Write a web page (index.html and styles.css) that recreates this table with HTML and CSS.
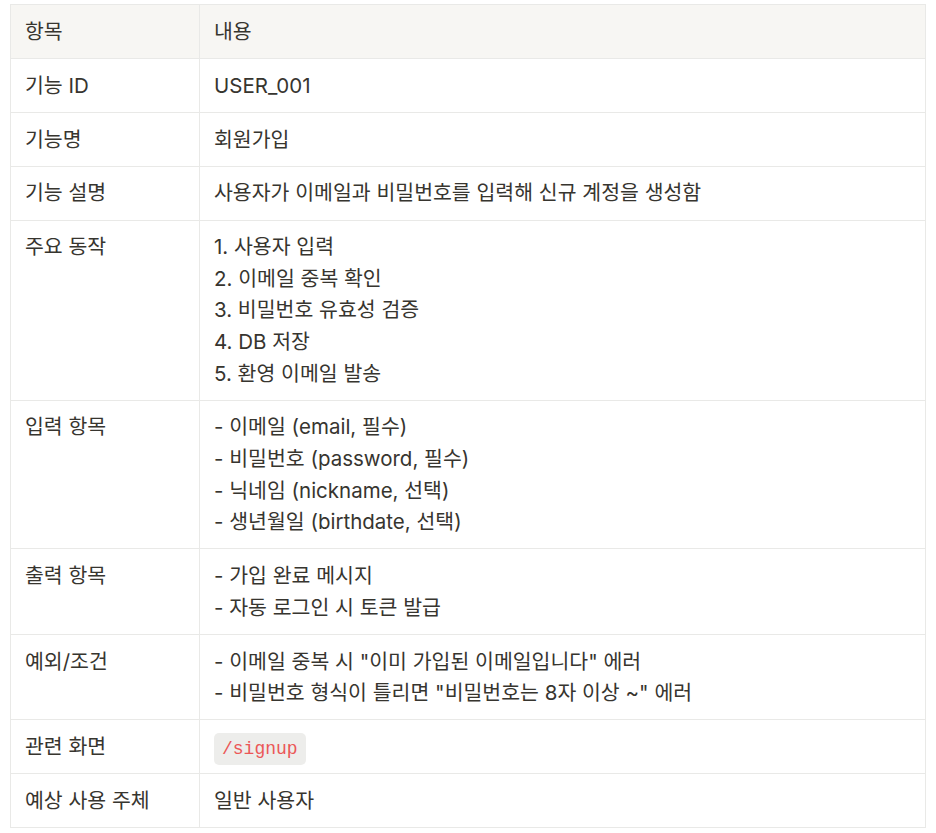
FILE: index.html
```html
<!DOCTYPE html>
<html lang="ko">
<head>
<meta charset="utf-8">
<title>기능 명세</title>
<link rel="stylesheet" href="styles.css">
</head>
<body>
<table class="spec">
  <colgroup><col class="c1"><col class="c2"></colgroup>
  <thead>
    <tr><th>항목</th><th>내용</th></tr>
  </thead>
  <tbody>
    <tr><td>기능 ID</td><td>USER_001</td></tr>
    <tr><td>기능명</td><td>회원가입</td></tr>
    <tr><td>기능 설명</td><td>사용자가 이메일과 비밀번호를 입력해 신규 계정을 생성함</td></tr>
    <tr><td>주요 동작</td><td>1. 사용자 입력<br>2. 이메일 중복 확인<br>3. 비밀번호 유효성 검증<br>4. DB 저장<br>5. 환영 이메일 발송</td></tr>
    <tr><td>입력 항목</td><td>- 이메일 (email, 필수)<br>- 비밀번호 (password, 필수)<br>- 닉네임 (nickname, 선택)<br>- 생년월일 (birthdate, 선택)</td></tr>
    <tr><td>출력 항목</td><td>- 가입 완료 메시지<br>- 자동 로그인 시 토큰 발급</td></tr>
    <tr><td>예외/조건</td><td>- 이메일 중복 시 "이미 가입된 이메일입니다" 에러<br>- 비밀번호 형식이 틀리면 "비밀번호는 8자 이상 ~" 에러</td></tr>
    <tr><td>관련 화면</td><td><code class="code">/signup</code></td></tr>
    <tr><td>예상 사용 주체</td><td>일반 사용자</td></tr>
  </tbody>
</table>
</body>
</html>
```
FILE: styles.css
```css
html, body {
  margin: 0;
  background: #ffffff;
}
body {
  padding: 4px 10px 0 10px;
  font-family: Inter, "Noto Sans CJK KR", sans-serif;
  font-size: 20.5px;
  color: rgb(55, 53, 47);
}
.spec {
  border-collapse: collapse;
  width: 916px;
  table-layout: fixed;
}
.c1 { width: 189px; }
.spec th,
.spec td {
  border: 1px solid rgb(233, 233, 231);
  padding: 10.7px 14px;
  line-height: 31.55px;
  text-align: left;
  vertical-align: top;
  font-weight: 400;
}
.spec thead th {
  background: rgb(247, 246, 243);
}
.code {
  font-family: "Liberation Mono", "DejaVu Sans Mono", monospace;
  font-size: 18px;
  line-height: 1;
  color: #eb5757;
  background: rgba(135, 131, 120, 0.15);
  border-radius: 5px;
  padding: 6px 8px;
}
```
